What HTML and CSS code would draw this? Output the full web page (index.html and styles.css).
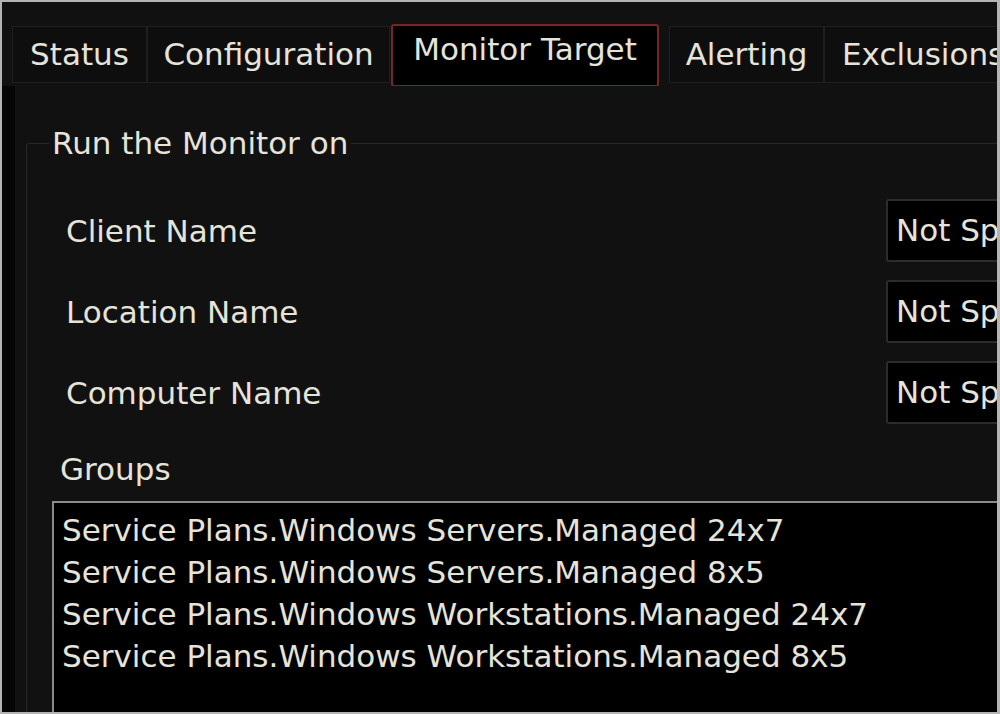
FILE: index.html
```html
<!DOCTYPE html>
<html>
<head>
<meta charset="utf-8">
<link rel="stylesheet" href="styles.css">
</head>
<body>
<div class="frame">
  <div class="tabs">
    <div class="tab tab-status">Status</div>
    <div class="tab tab-config">Configuration</div>
    <div class="tab tab-selected">Monitor Target</div>
    <div class="tab tab-alert">Alerting</div>
    <div class="tab tab-excl">Exclusions</div>
  </div>
  <div class="page">
    <fieldset class="group">
      <legend class="legend">Run the Monitor on</legend>
      <div class="row">
        <span class="label">Client Name</span>
        <div class="combo">Not Specified</div>
      </div>
      <div class="row">
        <span class="label">Location Name</span>
        <div class="combo">Not Specified</div>
      </div>
      <div class="row">
        <span class="label">Computer Name</span>
        <div class="combo">Not Specified</div>
      </div>
      <div class="groups-label">Groups</div>
      <div class="listbox">
        <div class="item">Service Plans.Windows Servers.Managed 24x7</div>
        <div class="item">Service Plans.Windows Servers.Managed 8x5</div>
        <div class="item">Service Plans.Windows Workstations.Managed 24x7</div>
        <div class="item">Service Plans.Windows Workstations.Managed 8x5</div>
      </div>
    </fieldset>
  </div>
</div>
</body>
</html>
```
FILE: styles.css
```css
html, body {
  margin: 0;
  padding: 0;
  background: #111111;
}
body {
  width: 1000px;
  height: 714px;
  overflow: hidden;
  font-family: "DejaVu Sans", sans-serif;
  font-size: 31px;
  color: #e6e4da;
}
.frame {
  box-sizing: border-box;
  width: 1000px;
  height: 714px;
  border: 2px solid #b4b4b4;
  border-right-width: 3px;
  background: #111111;
  display: flex;
  flex-direction: column;
  overflow: hidden;
}
.tabs {
  display: flex;
  align-items: flex-start;
  padding-left: 10px;
  margin-top: 22px;
  height: 62px;
  flex: none;
  white-space: nowrap;
  overflow: hidden;
}
.tab {
  box-sizing: border-box;
  flex: none;
  height: 57px;
  margin-top: 2px;
  border: 1px solid #1f1f1f;
  background: #0e0e0e;
  line-height: 55px;
  text-align: center;
}
.tab-status { width: 135px; }
.tab-config { width: 243px; }
.tab-selected {
  width: 268px;
  height: 63px;
  margin-top: 0;
  margin-left: 1px;
  border: 2px solid #7a2428;
  border-radius: 3px;
  background: #000000;
  line-height: 46px;
  position: relative;
  z-index: 1;
}
.tab-alert { width: 155px; margin-left: 10px; }
.tab-excl { width: 200px; padding-left: 17px; text-align: left; }
.page {
  flex: 1;
  display: flex;
  border-left: 13px solid #060606;
  padding-left: 11px;
  min-height: 0;
}
.group {
  flex: 1;
  margin: 39px 0 0 0;
  padding: 0 0 0 22px;
  border: 1px solid #272727;
  border-right: none;
  border-bottom: none;
  border-radius: 3px 0 0 0;
  min-width: 0;
}
.legend {
  padding: 0 3px;
  line-height: 36px;
}
.row {
  display: flex;
  align-items: center;
  height: 63px;
  margin-top: 18px;
}
.row:first-of-type { margin-top: 38px; }
.label {
  padding-left: 17px;
  width: 820px;
  flex: none;
}
.combo {
  box-sizing: border-box;
  flex: none;
  width: 240px;
  height: 63px;
  border: 2px solid #2c2c2c;
  border-radius: 3px;
  background: #000000;
  padding-left: 8px;
  line-height: 59px;
  white-space: nowrap;
}
.groups-label {
  margin-top: 27px;
  padding-left: 11px;
  line-height: 36px;
}
.listbox {
  margin: 14px 0 0 3px;
  height: 240px;
  border: 2px solid #8a8a8a;
  border-right: none;
  background: #000000;
  padding: 6px 0 0 8px;
  white-space: nowrap;
}
.item {
  line-height: 42px;
}
```
